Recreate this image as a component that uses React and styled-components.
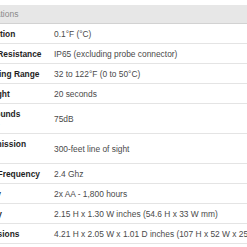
import React from 'react'
import styled, { createGlobalStyle } from 'styled-components'

const GlobalStyle = createGlobalStyle`
  html, body {
    margin: 0;
    padding: 0;
    background: #fff;
    overflow: hidden;
  }
`

const Page = styled.div`
  width: 247px;
  height: 247px;
  overflow: hidden;
  padding-top: 5px;
  box-sizing: border-box;
  font-family: 'Liberation Sans', Arial, sans-serif;
`

const Table = styled.div`
  margin-left: -36px;
  width: 420px;
`

const Header = styled.div`
  background: #e7e7e7;
  border-bottom: 1px solid #d2d2d2;
  color: #8a8a8a;
  font-size: 8.5px;
  line-height: 10px;
  padding: 4px 0 4px 2px;
`

const Row = styled.div`
  display: grid;
  grid-template-columns: 82px 1fr;
  align-items: center;
  border-bottom: 1px solid #e4e4e4;
  padding: 5px 0 4px;
  font-size: 8.4px;
  line-height: 10px;
`

const Label = styled.div`
  padding-left: 8px;
  font-weight: bold;
  color: #1e1e1e;
  white-space: nowrap;
`

const Value = styled.div`
  padding-left: 8px;
  color: #4a4a4a;
  white-space: nowrap;
`

const Note = styled.span`
  display: block;
  font-weight: normal;
  color: #3b7fc4;
`

const specs = [
  ['Resolution', '0.1°F (°C)'],
  ['Water Resistance', 'IP65 (excluding probe connector)'],
  ['Operating Range', '32 to 122°F (0 to 50°C)'],
  ['Backlight', '20 seconds'],
  ['Key Sounds', '75dB', 'Volume'],
  ['Transmission', '300-feet line of sight', '\u00a0'],
  ['Radio Frequency', '2.4 Ghz'],
  ['Battery', '2x AA - 1,800 hours'],
  ['Display', '2.15 H x 1.30 W inches (54.6 H x 33 W mm)'],
  ['Dimensions', '4.21 H x 2.05 W x 1.01 D inches (107 H x 52 W x 25.6 D mm)'],
  ['Weight', '3.5 oz (99 g)'],
]

export default function App() {
  return (
    <Page>
      <GlobalStyle />
      <Table>
        <Header>Specifications</Header>
        {specs.map(([label, value, note]) => (
          <Row key={label}>
            <Label>
              {label}
              {note !== undefined && <Note>{note}</Note>}
            </Label>
            <Value>{value}</Value>
          </Row>
        ))}
      </Table>
    </Page>
  )
}
